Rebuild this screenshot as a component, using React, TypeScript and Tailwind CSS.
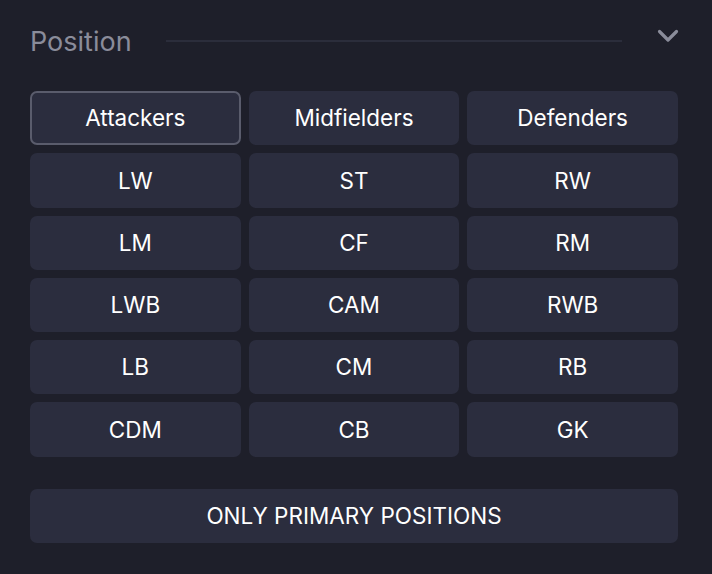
import React from "react";

const rows = [
  ["LW", "ST", "RW"],
  ["LM", "CF", "RM"],
  ["LWB", "CAM", "RWB"],
  ["LB", "CM", "RB"],
  ["CDM", "CB", "GK"],
];

const btn =
  "h-[54.3px] rounded-[7px] bg-[#2b2d3e] text-[22.5px] text-white flex items-center justify-center";

export default function App() {
  return (
    <div
      className="w-[712px] h-[574px] bg-[#1e1f2a] pl-[30px] pr-[34px] pt-[26px] text-white"
      style={{ fontFamily: "Inter, Lato, sans-serif" }}
    >
      <div className="flex items-center h-[30px]">
        <span className="text-[27px] text-[#8a8c9a] leading-none">Position</span>
        <div className="ml-[34px] flex-1 h-[2px] bg-[#2b2d3b]" />
        <div className="w-[56px] flex justify-end">
          <svg width="22" height="14" viewBox="0 0 22 14" className="-mt-[10px] -mr-[1px]">
            <path d="M2.5 2.5 L11 11 L19.5 2.5" fill="none" stroke="#8a8c9a" strokeWidth="3.2" strokeLinecap="round" strokeLinejoin="round" />
          </svg>
        </div>
      </div>
      <div className="mt-[35px] grid grid-cols-3 gap-x-[8px] gap-y-[8px]">
        {["Attackers", "Midfielders", "Defenders"].map((t, i) => (
          <button key={t} className={btn + (i === 0 ? " border-2 border-[#5a5c6c]" : "")}>
            {t}
          </button>
        ))}
        {rows.flat().map((t) => (
          <button key={t} className={btn}>
            {t}
          </button>
        ))}
      </div>
      <button className={"mt-[32px] w-full " + btn}>ONLY PRIMARY POSITIONS</button>
    </div>
  );
}
